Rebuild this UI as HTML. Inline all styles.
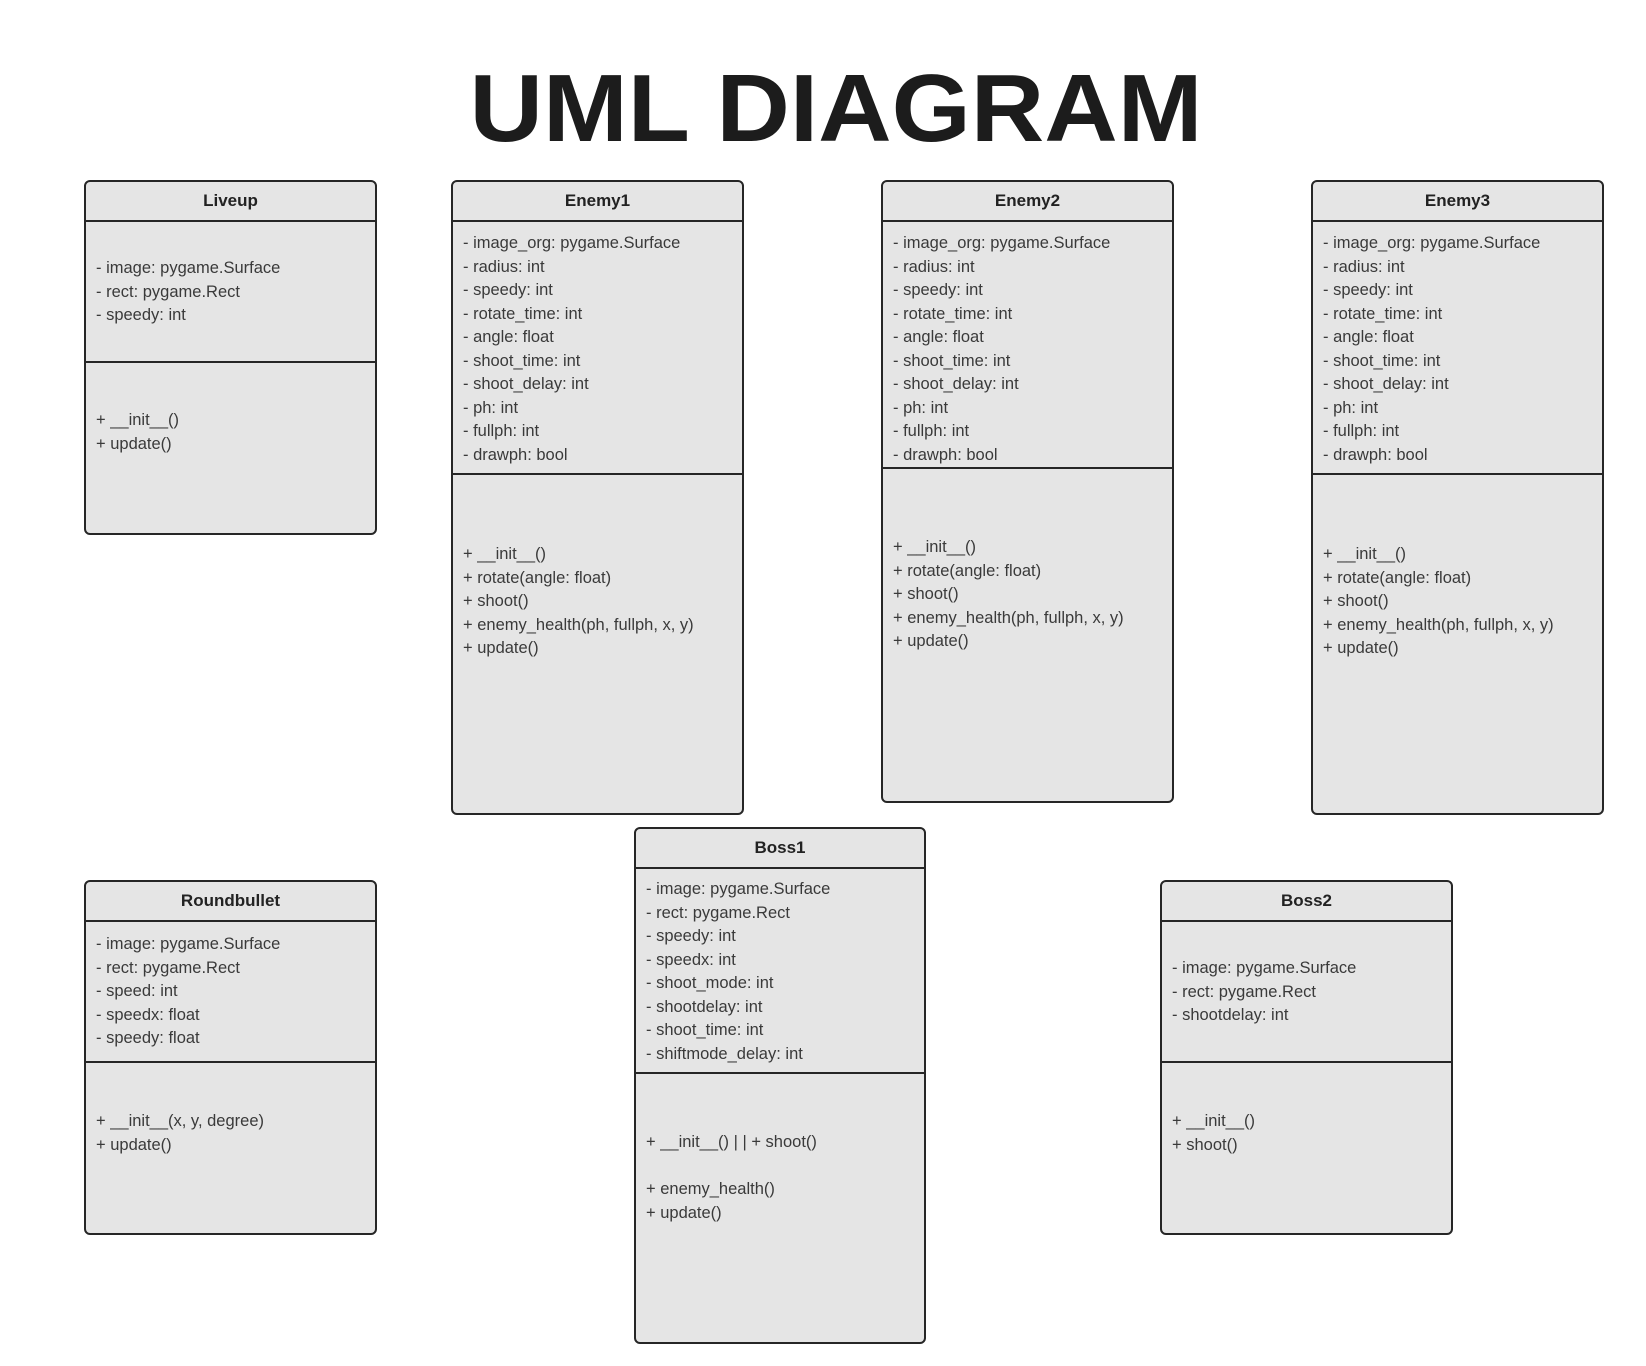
<!DOCTYPE html>
<html><head><meta charset="utf-8"><style>
body{margin:0;width:1646px;height:1366px;background:#fff;position:relative;overflow:hidden;font-family:"Liberation Sans",sans-serif;}
.t{position:absolute;left:13px;width:1646px;text-align:center;top:49px;font-size:96px;font-weight:bold;color:#1c1c1c;line-height:120px;transform:scaleX(1.06);}
.b{position:absolute;background:#e5e5e5;border:2px solid #262626;border-radius:6px;box-sizing:border-box;}
.h{position:absolute;left:0;right:0;top:0;height:38px;border-bottom:2px solid #262626;text-align:center;font-weight:bold;font-size:17px;line-height:38px;color:#222;}
.d{position:absolute;left:0;right:0;border-top:2px solid #262626;}
.x{position:absolute;left:10px;font-size:16.5px;line-height:23.5px;color:#3a3a3a;white-space:pre;}
</style></head><body>
<div class="t">UML DIAGRAM</div>

<div class="b" style="left:84px;top:180px;width:293px;height:355px">
<div class="h">Liveup</div>
<div class="x" style="top:75px">- image: pygame.Surface
- rect: pygame.Rect
- speedy: int</div>
<div class="d" style="top:179px"></div>
<div class="x" style="top:227px">+ __init__()
+ update()</div>
</div>

<div class="b" style="left:451px;top:180px;width:293px;height:635px">
<div class="h">Enemy1</div>
<div class="x" style="top:50px">- image_org: pygame.Surface
- radius: int
- speedy: int
- rotate_time: int
- angle: float
- shoot_time: int
- shoot_delay: int
- ph: int
- fullph: int
- drawph: bool</div>
<div class="d" style="top:291px"></div>
<div class="x" style="top:361px">+ __init__()
+ rotate(angle: float)
+ shoot()
+ enemy_health(ph, fullph, x, y)
+ update()</div>
</div>

<div class="b" style="left:881px;top:180px;width:293px;height:623px">
<div class="h">Enemy2</div>
<div class="x" style="top:50px">- image_org: pygame.Surface
- radius: int
- speedy: int
- rotate_time: int
- angle: float
- shoot_time: int
- shoot_delay: int
- ph: int
- fullph: int
- drawph: bool</div>
<div class="d" style="top:285px"></div>
<div class="x" style="top:354px">+ __init__()
+ rotate(angle: float)
+ shoot()
+ enemy_health(ph, fullph, x, y)
+ update()</div>
</div>

<div class="b" style="left:1311px;top:180px;width:293px;height:635px">
<div class="h">Enemy3</div>
<div class="x" style="top:50px">- image_org: pygame.Surface
- radius: int
- speedy: int
- rotate_time: int
- angle: float
- shoot_time: int
- shoot_delay: int
- ph: int
- fullph: int
- drawph: bool</div>
<div class="d" style="top:291px"></div>
<div class="x" style="top:361px">+ __init__()
+ rotate(angle: float)
+ shoot()
+ enemy_health(ph, fullph, x, y)
+ update()</div>
</div>

<div class="b" style="left:84px;top:880px;width:293px;height:355px">
<div class="h">Roundbullet</div>
<div class="x" style="top:51px">- image: pygame.Surface
- rect: pygame.Rect
- speed: int
- speedx: float
- speedy: float</div>
<div class="d" style="top:179px"></div>
<div class="x" style="top:228px">+ __init__(x, y, degree)
+ update()</div>
</div>

<div class="b" style="left:634px;top:827px;width:292px;height:517px">
<div class="h">Boss1</div>
<div class="x" style="top:49px">- image: pygame.Surface
- rect: pygame.Rect
- speedy: int
- speedx: int
- shoot_mode: int
- shootdelay: int
- shoot_time: int
- shiftmode_delay: int</div>
<div class="d" style="top:243px"></div>
<div class="x" style="top:302px">+ __init__() | | + shoot()

+ enemy_health()
+ update()</div>
</div>

<div class="b" style="left:1160px;top:880px;width:293px;height:355px">
<div class="h">Boss2</div>
<div class="x" style="top:75px">- image: pygame.Surface
- rect: pygame.Rect
- shootdelay: int</div>
<div class="d" style="top:179px"></div>
<div class="x" style="top:228px">+ __init__()
+ shoot()</div>
</div>
</body></html>
